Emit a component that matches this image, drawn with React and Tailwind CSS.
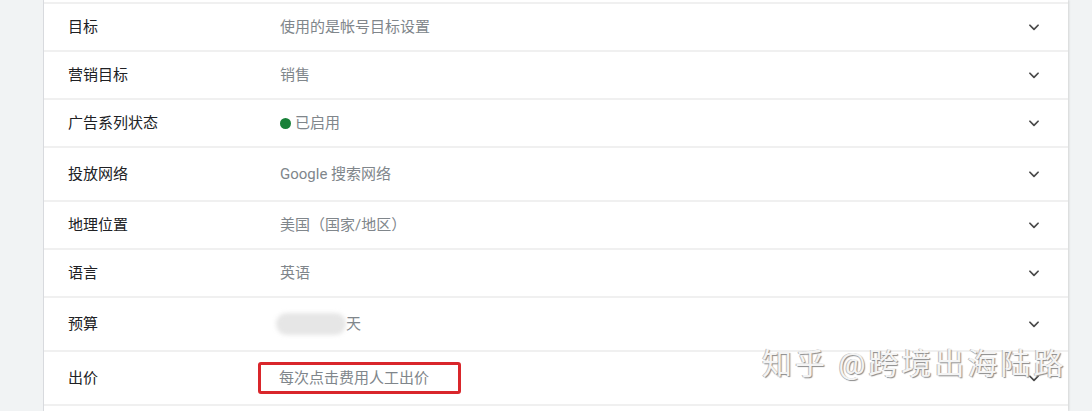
import React from "react";

const rows = [
  { label: "目标", value: "使用的是帐号目标设置", h: "h-[48px]" },
  { label: "营销目标", value: "销售", h: "h-[48px]" },
  { label: "广告系列状态", value: "status", h: "h-[48px]" },
  { label: "投放网络", value: "Google 搜索网络", h: "h-[54px]" },
  { label: "地理位置", value: "美国（国家/地区）", h: "h-[48px]" },
  { label: "语言", value: "英语", h: "h-[48px]" },
  { label: "预算", value: "budget", h: "h-[54px]" },
  { label: "出价", value: "bid", h: "h-[54px]" },
];

function Chevron() {
  return (
    <svg width="14" height="14" viewBox="0 0 24 24" fill="none" stroke="#4a4a4a" strokeWidth="3" strokeLinecap="round" strokeLinejoin="round">
      <path d="M5 9l7 7 7-7" />
    </svg>
  );
}

function Value({ v }) {
  if (v === "status") {
    return (
      <span className="flex items-center">
        <span className="mr-[4px] inline-block h-[11px] w-[11px] rounded-full bg-[#188038]" />
        <span>已启用</span>
      </span>
    );
  }
  if (v === "budget") {
    return (
      <span className="flex items-center">
        <span className="ml-[-4px] inline-block h-[22px] w-[70px] rounded-full bg-[#e6e6e6] blur-[2px]" />
        <span>天</span>
      </span>
    );
  }
  if (v === "bid") {
    return (
      <span className="ml-[-22px] flex h-[32px] w-[203px] items-center rounded-[3px] border-[3px] border-[#d9262b] pl-[18px]">
        每次点击费用人工出价
      </span>
    );
  }
  return <span>{v}</span>;
}

export default function App() {
  return (
    <div
      className="relative flex h-[411px] w-[1092px] overflow-hidden bg-[#f1f3f4]"
      style={{ fontFamily: 'Roboto, "Noto Sans CJK SC", sans-serif' }}
    >
      <div className="w-[44px] border-r border-[#dadce0]" />
      <div className="w-[1024px] bg-white pt-[2px] shadow-[1px_0_2px_rgba(0,0,0,0.12)]">
        {rows.map((r) => (
          <div
            key={r.label}
            className={`flex items-center border-t-2 border-[#f0f0f0] ${r.h}`}
          >
            <div className="w-[236px] pl-[24px] text-[15px] text-[#202124]">{r.label}</div>
            <div className="flex-1 text-[15px] text-[#80868b]">
              <Value v={r.value} />
            </div>
            <div className="flex w-[50px] justify-center pr-[18px]">
              <Chevron />
            </div>
          </div>
        ))}
        <div className="border-t-2 border-[#f0f0f0]" />
      </div>
      <div className="flex-1" />
      <div
        className="absolute left-[762px] top-[346px] text-[30px] leading-[36px] tracking-[3px] text-[#f4f4f4]"
        style={{ textShadow: "1px 1px 1px #8a8a8a, -1px 0 0 #bdbdbd" }}
      >
        知乎 @跨境出海陆路
      </div>
    </div>
  );
}
